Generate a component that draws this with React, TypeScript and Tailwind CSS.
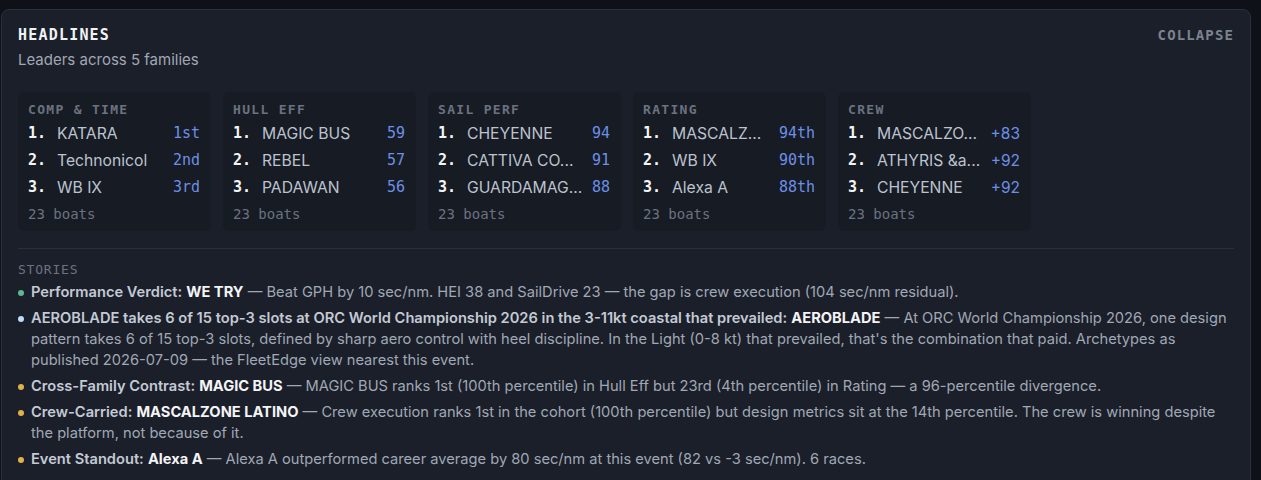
import React from "react";

const MONO = { fontFamily: '"DejaVu Sans Mono", "Liberation Mono", monospace' } as const;

type Row = { name: string; value: string };
type Family = { title: string; rows: Row[]; sansValue?: boolean };

const families: Family[] = [
  { title: "COMP & TIME", rows: [{ name: "KATARA", value: "1st" }, { name: "Technonicol", value: "2nd" }, { name: "WB IX", value: "3rd" }] },
  { title: "HULL EFF", rows: [{ name: "MAGIC BUS", value: "59" }, { name: "REBEL", value: "57" }, { name: "PADAWAN", value: "56" }] },
  { title: "SAIL PERF", rows: [{ name: "CHEYENNE", value: "94" }, { name: "CATTIVA CO...", value: "91" }, { name: "GUARDAMAG...", value: "88" }] },
  { title: "RATING", rows: [{ name: "MASCALZ...", value: "94th" }, { name: "WB IX", value: "90th" }, { name: "Alexa A", value: "88th" }] },
  { title: "CREW", sansValue: true, rows: [{ name: "MASCALZO...", value: "+83" }, { name: "ATHYRIS &a...", value: "+92" }, { name: "CHEYENNE", value: "+92" }] },
];

type Story = { dot: string; label: string; entity: string; body: string };
const stories: Story[] = [
  { dot: "bg-[#5bb994]", label: "Performance Verdict:", entity: "WE TRY", body: "Beat GPH by 10 sec/nm. HEI 38 and SailDrive 23 — the gap is crew execution (104 sec/nm residual)." },
  { dot: "bg-[#bcdcfb]", label: "AEROBLADE takes 6 of 15 top-3 slots at ORC World Championship 2026 in the 3-11kt coastal that prevailed:", entity: "AEROBLADE", body: "At ORC World Championship 2026, one design pattern takes 6 of 15 top-3 slots, defined by sharp aero control with heel discipline. In the Light (0-8 kt) that prevailed, that's the combination that paid. Archetypes as published 2026-07-09 — the FleetEdge view nearest this event." },
  { dot: "bg-[#e2b24a]", label: "Cross-Family Contrast:", entity: "MAGIC BUS", body: "MAGIC BUS ranks 1st (100th percentile) in Hull Eff but 23rd (4th percentile) in Rating — a 96-percentile divergence." },
  { dot: "bg-[#e2b24a]", label: "Crew-Carried:", entity: "MASCALZONE LATINO", body: "Crew execution ranks 1st in the cohort (100th percentile) but design metrics sit at the 14th percentile. The crew is winning despite the platform, not because of it." },
  { dot: "bg-[#e2b24a]", label: "Event Standout:", entity: "Alexa A", body: "Alexa A outperformed career average by 80 sec/nm at this event (82 vs -3 sec/nm). 6 races." },
];

function FamilyCard({ f }: { f: Family }) {
  return (
    <div className="w-[193px] rounded-md bg-[#171b24] pl-[10px] pr-[11px] pt-[10px] pb-[3px]">
      <div style={MONO} className="h-[18px] text-[13px] leading-[16px] font-bold tracking-[0.1em] text-[#6b7280]">
        {f.title}
      </div>
      {f.rows.map((r, i) => (
        <div key={i} className="flex h-[27px] items-center">
          <span style={MONO} className="w-[29px] shrink-0 text-[15px] font-bold text-[#f3f4f6]">
            {i + 1}.
          </span>
          <span className="min-w-0 flex-1 truncate text-[15.7px] text-[#bcc3ce]">{r.name}</span>
          <span
            style={f.sansValue ? undefined : MONO}
            className={`ml-[4px] shrink-0 text-[#6d8fe6] ${f.sansValue ? "text-[15.5px]" : "text-[15px]"}`}
          >
            {r.value}
          </span>
        </div>
      ))}
      <div style={MONO} className="flex h-[27px] items-center text-[14px] text-[#6b7280]">
        23 boats
      </div>
    </div>
  );
}

export default function App() {
  return (
    <div className="min-h-[480px] bg-[#0e1117] pt-[9px] pl-[1px] pr-[10px]" style={{ fontFamily: 'Inter, "Noto Sans", sans-serif' }}>
      <div className="rounded-lg border border-[#2a303b] bg-[#1b1f29] px-4 pt-[15px] pb-5">
        <div className="flex items-start justify-between">
          <div>
            <div style={MONO} className="h-[20px] text-[15px] leading-[20px] font-bold tracking-[0.08em] text-[#f0f3f6]">
              HEADLINES
            </div>
            <div className="mt-[5px] text-[15px] leading-[20px] text-[#a0a8b5]">Leaders across 5 families</div>
          </div>
          <div style={MONO} className="text-[14px] leading-[20px] font-bold tracking-[0.08em] text-[#7b8390]">
            COLLAPSE
          </div>
        </div>

        <div className="mt-[22px] flex gap-3">
          {families.map((f) => (
            <FamilyCard key={f.title} f={f} />
          ))}
        </div>

        <div className="mt-[17px] border-t border-[#2a303b] pt-[13px]">
          <div style={MONO} className="h-[16px] text-[13px] leading-[16px] tracking-[0.06em] text-[#6b7280]">
            STORIES
          </div>
          <div className="mt-[4px] flex flex-col gap-[5px]">
            {stories.map((s, i) => (
              <div key={i} className="flex text-[14.66px] leading-[21px]">
                <span className={`mt-[8px] mr-[7px] h-[6px] w-[6px] shrink-0 rounded-full ${s.dot}`} />
                <p className="text-[#a0a8b5]">
                  <span className="font-semibold text-[#c3cad5]">{s.label}</span>{" "}
                  <span className="font-bold text-[#f3f4f6]">{s.entity}</span> — {s.body}
                </p>
              </div>
            ))}
          </div>
        </div>
      </div>
    </div>
  );
}
